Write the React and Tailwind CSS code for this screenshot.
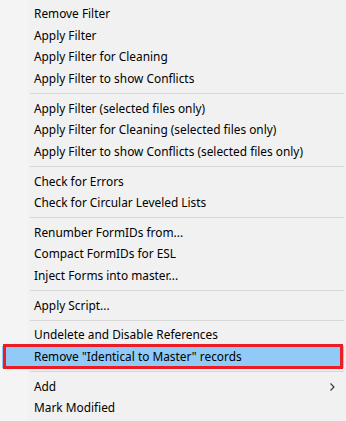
import React from 'react';

const groups = [
  ['Remove Filter', 'Apply Filter', 'Apply Filter for Cleaning', 'Apply Filter to show Conflicts'],
  ['Apply Filter (selected files only)', 'Apply Filter for Cleaning (selected files only)', 'Apply Filter to show Conflicts (selected files only)'],
  ['Check for Errors', 'Check for Circular Leveled Lists'],
  ['Renumber FormIDs from...', 'Compact FormIDs for ESL', 'Inject Forms into master...'],
  ['Apply Script...'],
  ['Undelete and Disable References', 'Remove "Identical to Master" records'],
  ['Add', 'Mark Modified'],
];

const MenuItem = ({ label }) => {
  const active = label.startsWith('Remove "Identical');
  const hasSub = label === 'Add';

  if (active) {
    return (
      <div className="relative mx-[2px] h-[21.67px] flex items-center pl-[32px] bg-[#91c9f7]">
        <span>{label}</span>
        {/* red annotation box */}
        <div className="absolute -top-[2px] -bottom-[1px] left-[1px] right-[1px] border-[3px] border-[#ed1c24]" />
      </div>
    );
  }

  return (
    <div className="relative h-[21.67px] flex items-center pl-[34px]">
      <span>{label}</span>
      {hasSub && (
        <svg className="absolute right-[11px] top-[7px]" width="5" height="8" viewBox="0 0 5 8">
          <polyline points="0.5,0.5 4,4 0.5,7.5" fill="none" stroke="#333" strokeWidth="1.1" />
        </svg>
      )}
    </div>
  );
};

const Separator = () => (
  <div className="h-[8px] flex items-center pl-[30px] pr-[2px]">
    <div className="h-px w-full bg-[#d7d7d7]" />
  </div>
);

export default function App() {
  return (
    <div
      className="w-[346px] h-[421px] overflow-hidden pt-[3px] text-[11.87px] text-black bg-[linear-gradient(to_right,#f4f4f4_28px,#f1f1f1_28px)]"
      style={{ fontFamily: '"Noto Sans", "Open Sans", sans-serif' }}
    >
      {groups.map((group, gi) => (
        <div key={gi}>
          {gi > 0 && <Separator />}
          {group.map((label) => (
            <MenuItem key={label} label={label} />
          ))}
        </div>
      ))}
    </div>
  );
}
